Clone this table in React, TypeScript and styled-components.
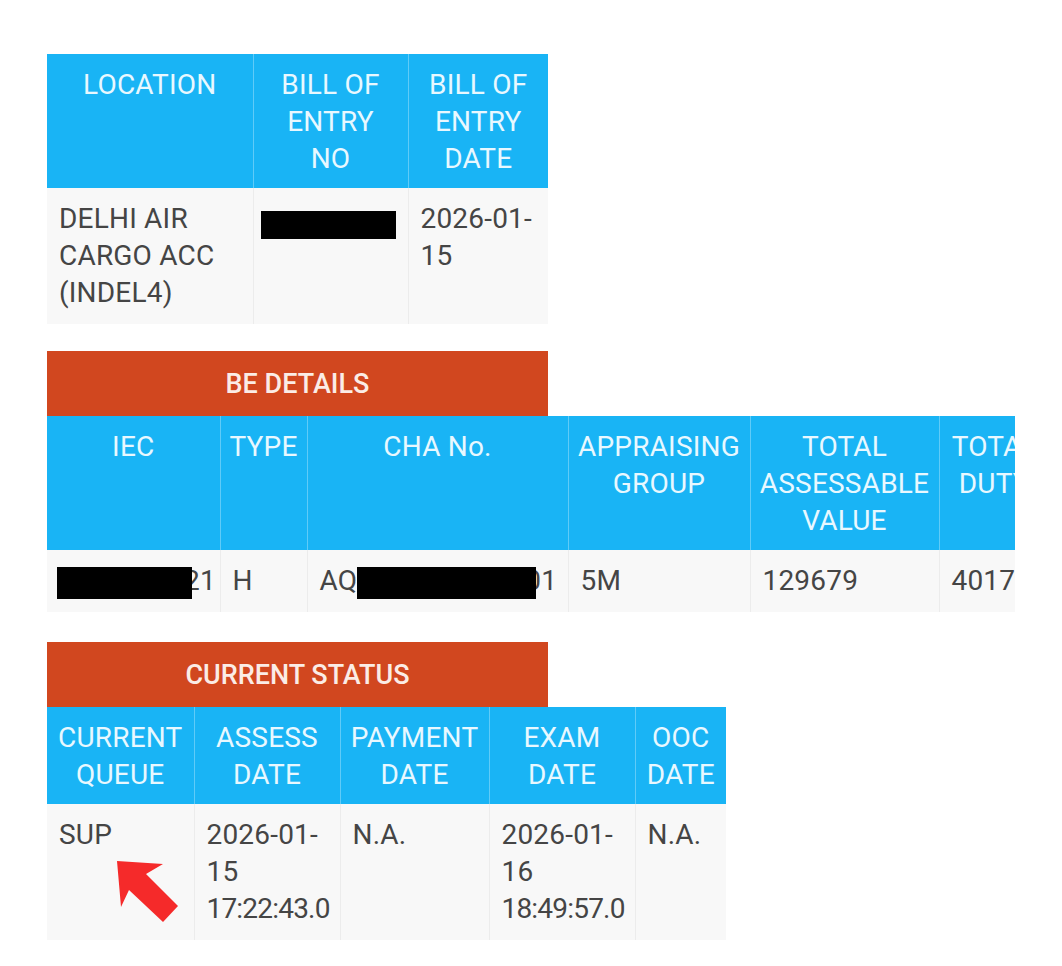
import styled, { createGlobalStyle } from "styled-components";

const GlobalStyle = createGlobalStyle`
  html, body {
    margin: 0;
    padding: 0;
    background: #ffffff;
    font-family: Roboto, "Noto Sans", "Liberation Sans", sans-serif;
  }
`;

const Page = styled.div`
  display: flex;
  flex-direction: column;
  align-items: flex-start;
  padding: 54px 0 0 47px;
  width: 1015px;
  box-sizing: border-box;
`;

const Section = styled.div<{ $gap?: number }>`
  display: flex;
  flex-direction: column;
  margin-top: ${({ $gap }) => $gap ?? 0}px;
`;

const TitleBar = styled.div`
  width: 501px;
  height: 65px;
  background: #d1471f;
  color: #fbece6;
  font-size: 27px;
  font-weight: 500;
  display: flex;
  align-items: center;
  justify-content: center;
`;

const Clip = styled.div<{ $w: number }>`
  width: ${({ $w }) => $w}px;
  overflow: hidden;
`;

const Table = styled.table<{ $w: number }>`
  border-collapse: collapse;
  table-layout: fixed;
  width: ${({ $w }) => $w}px;
  min-width: ${({ $w }) => $w}px;
  font-size: 28px;
  line-height: 37px;
  letter-spacing: 0.2px;
`;

const Col = styled.col<{ $w: number }>`
  width: ${({ $w }) => $w}px;
`;

const Th = styled.th`
  background: #19b4f5;
  color: #e8f8ff;
  font-weight: 400;
  text-align: center;
  vertical-align: top;
  padding: 12px 4px 11px;
  border-left: 1px solid #5fcbf8;
  &:first-child {
    border-left: none;
  }
`;

const Td = styled.td`
  background: #f8f8f8;
  color: #454545;
  text-align: left;
  vertical-align: top;
  padding: 12px 12px 13px;
  white-space: nowrap;
  position: relative;
  border-left: 1px solid #ececec;
  &:first-child {
    border-left: none;
  }
`;

const Wrap = styled.span`
  white-space: normal;
`;

const Time = styled.span`
  letter-spacing: -0.8px;
`;

const Redact = styled.span<{ $w: number; $h: number; $over?: number }>`
  display: inline-block;
  width: ${({ $w }) => $w}px;
  height: ${({ $h }) => $h}px;
  background: #000;
  vertical-align: middle;
  position: relative;
  z-index: 1;
  margin-right: ${({ $over }) => -($over ?? 0)}px;
`;

const Arrow = styled.svg`
  position: absolute;
  left: 63px;
  top: 50px;
  width: 76px;
  height: 76px;
`;

export default function App() {
  return (
    <>
      <GlobalStyle />
      <Page>
        <Table $w={501}>
          <colgroup>
            <Col $w={206} />
            <Col $w={155} />
            <Col $w={140} />
          </colgroup>
          <thead>
            <tr>
              <Th>LOCATION</Th>
              <Th>
                BILL OF ENTRY
                <br />
                NO
              </Th>
              <Th>BILL OF ENTRY DATE</Th>
            </tr>
          </thead>
          <tbody>
            <tr>
              <Td>
                <Wrap>DELHI AIR CARGO ACC (INDEL4)</Wrap>
              </Td>
              <Td>
                <Redact $w={135} $h={28} style={{ marginTop: 8, marginLeft: -5 }} />
              </Td>
              <Td>
                2026-01-
                <br />
                15
              </Td>
            </tr>
          </tbody>
        </Table>

        <Section $gap={27}>
          <TitleBar>BE DETAILS</TitleBar>
          <Clip $w={968}>
            <Table $w={1002}>
              <colgroup>
                <Col $w={173} />
                <Col $w={87} />
                <Col $w={261} />
                <Col $w={182} />
                <Col $w={189} />
                <Col $w={110} />
              </colgroup>
              <thead>
                <tr>
                  <Th>IEC</Th>
                  <Th>TYPE</Th>
                  <Th>CHA No.</Th>
                  <Th>APPRAISING GROUP</Th>
                  <Th>TOTAL ASSESSABLE VALUE</Th>
                  <Th>TOTAL DUTY</Th>
                </tr>
              </thead>
              <tbody>
                <tr>
                  <Td>
                    <Redact $w={135} $h={32} $over={8} style={{ marginLeft: -2 }} />
                    21
                  </Td>
                  <Td>H</Td>
                  <Td>
                    AQ
                    <Redact $w={179} $h={32} $over={11} />
                    01
                  </Td>
                  <Td>5M</Td>
                  <Td>129679</Td>
                  <Td>40175</Td>
                </tr>
              </tbody>
            </Table>
          </Clip>
        </Section>

        <Section $gap={30}>
          <TitleBar>CURRENT STATUS</TitleBar>
          <Table $w={679}>
            <colgroup>
              <Col $w={147} />
              <Col $w={146} />
              <Col $w={149} />
              <Col $w={146} />
              <Col $w={91} />
            </colgroup>
            <thead>
              <tr>
                <Th>CURRENT QUEUE</Th>
                <Th>ASSESS DATE</Th>
                <Th>PAYMENT DATE</Th>
                <Th>EXAM DATE</Th>
                <Th>OOC DATE</Th>
              </tr>
            </thead>
            <tbody>
              <tr>
                <Td>
                  SUP
                  <Arrow viewBox="0 0 76 76">
                    <polygon
                      points="7,7 53,10 36,20 68,52 53,68 19,36 11,53"
                      fill="#f52a2a"
                    />
                  </Arrow>
                </Td>
                <Td>
                  2026-01-
                  <br />
                  15
                  <br />
                  <Time>17:22:43.0</Time>
                </Td>
                <Td>N.A.</Td>
                <Td>
                  2026-01-
                  <br />
                  16
                  <br />
                  <Time>18:49:57.0</Time>
                </Td>
                <Td>N.A.</Td>
              </tr>
            </tbody>
          </Table>
        </Section>
      </Page>
    </>
  );
}
